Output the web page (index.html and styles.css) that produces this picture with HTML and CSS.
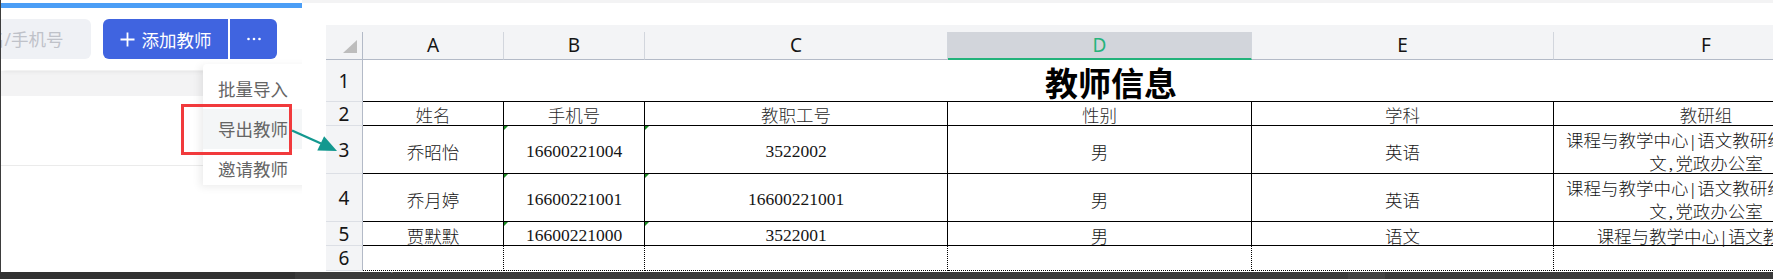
FILE: index.html
```html
<!DOCTYPE html>
<html lang="zh">
<head>
<meta charset="utf-8">
<title>导出教师</title>
<link rel="stylesheet" href="styles.css">
</head>
<body>
<div class="page">
  <div class="main">
    <section class="app">
      <div class="progress"></div>
      <div class="toolbar">
        <div class="search">请输入姓名/手机号</div>
        <div class="btn-group">
          <div class="btn btn-add">
            <svg class="plus" width="15" height="15" viewBox="0 0 15 15"><path d="M7.5 0.5v14M0.5 7.5h14" stroke="#fff" stroke-width="1.8" fill="none"/></svg>
            <span>添加教师</span>
          </div>
          <div class="btn btn-more">
            <svg width="14" height="4" viewBox="0 0 14 4"><circle cx="1.5" cy="2" r="1.3" fill="#fff"/><circle cx="7" cy="2" r="1.3" fill="#fff"/><circle cx="12.5" cy="2" r="1.3" fill="#fff"/></svg>
          </div>
        </div>
      </div>
      <div class="thead"></div>
      <div class="trow"></div>
      <div class="menu">
        <div class="menu-item">批量导入</div>
        <div class="menu-item active">导出教师</div>
        <div class="menu-item">邀请教师</div>
      </div>
      <div class="mark-box"></div>
    </section>

    <section class="viewer">
      <div class="sheet">
        <div class="colh corner"><span></span></div>
        <div class="colh"><span>A</span></div>
        <div class="colh"><span>B</span></div>
        <div class="colh"><span>C</span></div>
        <div class="colh sel"><span>D</span></div>
        <div class="colh"><span>E</span></div>
        <div class="colh"><span>F</span></div>

        <div class="rowh">1</div>
        <div class="c title">教师信息</div>

        <div class="rowh">2</div>
        <div class="c hd">姓名</div>
        <div class="c hd">手机号</div>
        <div class="c hd">教职工号</div>
        <div class="c hd">性别</div>
        <div class="c hd">学科</div>
        <div class="c hd">教研组</div>

        <div class="rowh">3</div>
        <div class="c">乔昭怡</div>
        <div class="c txtnum">16600221004</div>
        <div class="c txtnum">3522002</div>
        <div class="c">男</div>
        <div class="c">英语</div>
        <div class="c wrap"><span class="txt">课程与教学中心<span class="half">|</span>语文教研组<span class="half">,</span>初中语<br>文<span class="half">,</span>党政办公室</span></div>

        <div class="rowh">4</div>
        <div class="c">乔月婷</div>
        <div class="c txtnum">16600221001</div>
        <div class="c txtnum">16600221001</div>
        <div class="c">男</div>
        <div class="c">英语</div>
        <div class="c wrap"><span class="txt">课程与教学中心<span class="half">|</span>语文教研组<span class="half">,</span>初中语<br>文<span class="half">,</span>党政办公室</span></div>

        <div class="rowh">5</div>
        <div class="c">贾默默</div>
        <div class="c txtnum">16600221000</div>
        <div class="c txtnum">3522001</div>
        <div class="c">男</div>
        <div class="c">语文</div>
        <div class="c"><span class="txt">课程与教学中心<span class="half">|</span>语文教研组</span></div>

        <div class="rowh">6</div>
        <div class="c blank"></div>
        <div class="c blank"></div>
        <div class="c blank"></div>
        <div class="c blank"></div>
        <div class="c blank"></div>
        <div class="c blank"></div>
      </div>
    </section>

    <svg class="arrow" width="360" height="272" viewBox="0 0 360 272">
      <path d="M292 130.5 L321 143.5" stroke="#13988f" stroke-width="2.4" fill="none"/>
      <polygon points="337,151 317.3,150.6 324.1,136.2" fill="#13988f"/>
    </svg>
  </div>
  <div class="taskbar">
    <div class="tb-a"></div>
    <div class="tb-b"><span class="tb-glyph">↵</span></div>
    <div class="tb-c"></div>
    <div class="tb-d"></div>
  </div>
</div>
</body>
</html>
```

FILE: styles.css
```css
html, body {
  margin: 0;
  padding: 0;
  background: #fff;
}

.page {
  width: 1773px;
  height: 279px;
  overflow: hidden;
  display: flex;
  flex-direction: column;
}

.main {
  position: relative;
  height: 272px;
  display: flex;
  flex: none;
}

/* ---------- left app panel ---------- */
.app {
  width: 301px;
  flex: none;
  position: relative;
  overflow: hidden;
  border-left: 1px solid #3d3d3d;
  font-family: "Noto Sans", "Noto Sans CJK SC", sans-serif;
}

.progress {
  margin-top: 3px;
  height: 5px;
  background: #4b9ef6;
}

.toolbar {
  height: 62px;
  box-sizing: border-box;
  padding-top: 11px;
  display: flex;
  align-items: flex-start;
  background: #fff;
  position: relative;
  z-index: 1;
  box-shadow: 0 3px 5px -2px rgba(0, 0, 0, 0.09);
}

.search {
  flex: none;
  margin-left: -96px;
  width: 186px;
  height: 40px;
  box-sizing: border-box;
  padding-left: 12px;
  border-radius: 6px;
  background: #eff1f5;
  color: #bfc2c9;
  font-size: 17.5px;
  line-height: 40px;
  white-space: nowrap;
  overflow: hidden;
}

.btn-group {
  margin-left: 12px;
  display: flex;
  gap: 2px;
}

.btn {
  height: 40px;
  display: flex;
  align-items: center;
  justify-content: center;
  background: #4064e0;
  color: #fff;
  font-size: 17.5px;
}

.btn-add {
  width: 125px;
  gap: 7px;
  border-radius: 6px 0 0 6px;
}

.btn-add .plus {
  flex: none;
}

.btn-more {
  width: 47px;
  border-radius: 0 6px 6px 0;
}

.thead {
  margin-top: 1px;
  height: 25px;
  background: #f3f3f4;
}

.trow {
  height: 69px;
  border-bottom: 1px solid #ebebeb;
}

.menu {
  position: absolute;
  left: 202px;
  top: 64px;
  width: 120px;
  height: 121px;
  box-sizing: border-box;
  padding-top: 5px;
  background: #fff;
  border-radius: 4px 0 0 0;
  box-shadow: -3px 2px 9px rgba(0, 0, 0, 0.08);
  overflow: hidden;
  z-index: 2;
}

.menu-item {
  height: 40px;
  line-height: 40px;
  padding-left: 15px;
  color: #656565;
  font-size: 17.5px;
  white-space: nowrap;
}

.menu-item.active {
  background: #f4f6f7;
}

.mark-box {
  position: absolute;
  left: 180px;
  top: 104px;
  width: 111px;
  height: 51px;
  box-sizing: border-box;
  border: 3px solid #f13a3c;
  z-index: 3;
}

/* ---------- spreadsheet viewer ---------- */
.viewer {
  flex: 1;
  min-width: 0;
  overflow: hidden;
  border-top: 3px solid #f3f3f4;
  padding-left: 24px;
}

.sheet {
  margin-top: 22px;
  display: grid;
  grid-template-columns: 37px 141px 141px 303px 304px 302px 305px;
  grid-template-rows: 35px 42px 24px 48px 48px 24px 25px;
  width: 1533px;
}

.colh {
  background: #f3f4f6;
  padding-top: 7px;
  font-family: "Noto Sans", "Open Sans", sans-serif;
  font-size: 19px;
  color: #151515;
}

.colh > span {
  display: flex;
  align-items: center;
  justify-content: center;
  height: 28px;
  box-sizing: border-box;
  border-right: 1px solid #d2d6dd;
  border-bottom: 1px solid #b3bac7;
  padding-bottom: 1px;
}

.colh.sel > span {
  background: #d2d5db;
  color: #26b37b;
  border-bottom: 2px solid #22b27a;
}

.corner > span {
  position: relative;
  border-right-color: #b3bac7;
}

.corner > span::after {
  content: "";
  position: absolute;
  right: 5px;
  bottom: 6px;
  border-left: 14px solid transparent;
  border-bottom: 13px solid #bdbdbd;
}

.rowh {
  background: #f3f4f6;
  border-right: 1px solid #b3bac7;
  border-bottom: 1px solid #dcdfe5;
  box-sizing: border-box;
  display: flex;
  align-items: center;
  justify-content: center;
  font-family: "Noto Sans", "Open Sans", sans-serif;
  font-size: 19px;
  color: #151515;
}

.c {
  position: relative;
  box-sizing: border-box;
  border-right: 1px solid #000;
  border-bottom: 1px solid #000;
  display: flex;
  align-items: center;
  justify-content: center;
  text-align: center;
  padding-top: 3px;
  font-family: "Liberation Serif", "Noto Sans CJK SC", serif;
  font-size: 17.5px;
  font-weight: 300;
  color: #151515;
  white-space: nowrap;
}

.c .txt {
  display: block;
  text-align: center;
}

.c.hd {
  padding-top: 1px;
  color: #2a2a2a;
}

.c.title {
  grid-column: 2 / span 6;
  border-right: none;
  padding-top: 2px;
  font-family: "Noto Sans CJK SC", sans-serif;
  font-size: 33px;
  font-weight: 700;
  color: #000;
}

.c.wrap {
  line-height: 23px;
  padding-top: 6px;
}

.half {
  display: inline-block;
  width: 0.5em;
  text-align: center;
}

.c.txtnum::before {
  content: "";
  position: absolute;
  left: 0;
  top: 0;
  border-top: 4px solid #1b8a22;
  border-right: 4px solid transparent;
}

.c.blank {
  border-right: 1px dotted #000;
  border-bottom: 1px dotted #000;
}

/* ---------- annotation arrow ---------- */
.arrow {
  position: absolute;
  left: 0;
  top: 0;
  pointer-events: none;
  z-index: 5;
}

/* ---------- taskbar ---------- */
.taskbar {
  height: 7px;
  flex: none;
  display: flex;
  background: #3b3b3b;
}

.tb-a {
  width: 295px;
  background: #323232;
}

.tb-b {
  width: 1053px;
  position: relative;
  overflow: hidden;
}

.tb-glyph {
  position: absolute;
  left: 95px;
  top: -6px;
  font-family: "DejaVu Sans", sans-serif;
  font-size: 9px;
  color: #8a8a8a;
}

.tb-c {
  width: 37px;
  background: #444;
}

.tb-d {
  flex: 1;
}
```
